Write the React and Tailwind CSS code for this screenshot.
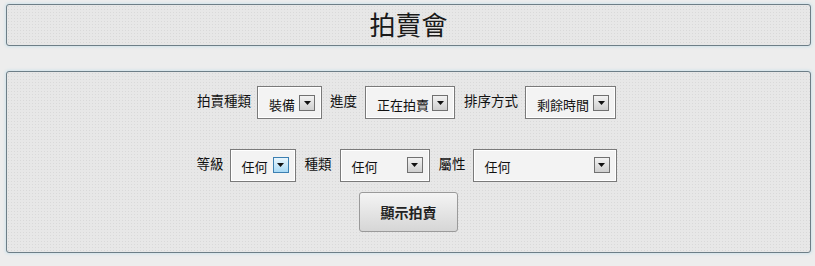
import React from 'react';

const font = { fontFamily: '"Noto Sans CJK TC", "Noto Sans", sans-serif' };

function Arrow({ active }) {
  return (
    <span
      className={`flex h-[16px] w-[16px] shrink-0 items-center justify-center border ${
        active
          ? 'border-[#3c7fb1] bg-gradient-to-b from-[#eaf6fd] to-[#a7d9f5]'
          : 'border-[#707070] bg-gradient-to-b from-[#f2f2f2] to-[#cfcfcf]'
      }`}
    >
      <svg width="7" height="4" viewBox="0 0 7 4">
        <path d="M0 0h7L3.5 4z" fill="#111" />
      </svg>
    </span>
  );
}

function Select({ value, width, active }) {
  return (
    <div
      className="flex h-[33px] shrink-0 items-center justify-between gap-[2px] border border-[#7a7a7a] bg-[#f3f3f3] pl-[11px] pr-[6px] shadow-[inset_0_0_0_1px_#ffffff]"
      style={{ width }}
    >
      <span className="whitespace-nowrap pt-[3px] text-[13px] leading-none text-[#111]">{value}</span>
      <Arrow active={active} />
    </div>
  );
}

function Label({ children, width }) {
  return (
    <span
      className="-mt-[3px] shrink-0 whitespace-nowrap text-[13.5px] leading-none text-[#111]"
      style={{ width }}
    >
      {children}
    </span>
  );
}

const panel =
  'rounded-[3px] border border-[#6d7e87] bg-[#e7e7e7] bg-[radial-gradient(#d9d9d9_0.6px,transparent_0.6px)] bg-[length:3px_3px] shadow-[0_0_3px_1px_#cfe2ea]';

export default function App() {
  return (
    <div className="h-[266px] w-[815px] bg-[#ededed] pt-[4px]" style={font}>
      <div className={`ml-[6px] mr-[4px] flex h-[42px] items-center justify-center ${panel}`}>
        <h1 className="pb-[2px] text-[26px] font-normal leading-none text-[#1a1a1a]">拍賣會</h1>
      </div>

      <div className={`ml-[6px] mr-[4px] mt-[25px] flex h-[182px] flex-col items-center pt-[14px] ${panel}`}>
        <div className="flex h-[33px] items-center pr-[4px]">
          <Label width={60}>拍賣種類</Label>
          <Select value="裝備" width={65} />
          <span className="w-[8px]" />
          <Label width={35}>進度</Label>
          <Select value="正在拍賣" width={90} />
          <span className="w-[9px]" />
          <Label width={61}>排序方式</Label>
          <Select value="剩餘時間" width={91} />
        </div>

        <div className="mt-[29px] flex h-[34px] items-center pr-[4px]">
          <Label width={33}>等級</Label>
          <Select value="任何" width={66} active />
          <span className="w-[9px]" />
          <Label width={35}>種類</Label>
          <Select value="任何" width={90} />
          <span className="w-[9px]" />
          <Label width={34}>屬性</Label>
          <Select value="任何" width={144} />
        </div>

        <button className="mt-[10px] h-[40px] w-[99px] rounded-[3px] border border-[#9a9a9a] bg-gradient-to-b from-[#f4f4f4] to-[#d6d6d6] text-[14px] font-bold text-[#222]">
          顯示拍賣
        </button>
      </div>
    </div>
  );
}
